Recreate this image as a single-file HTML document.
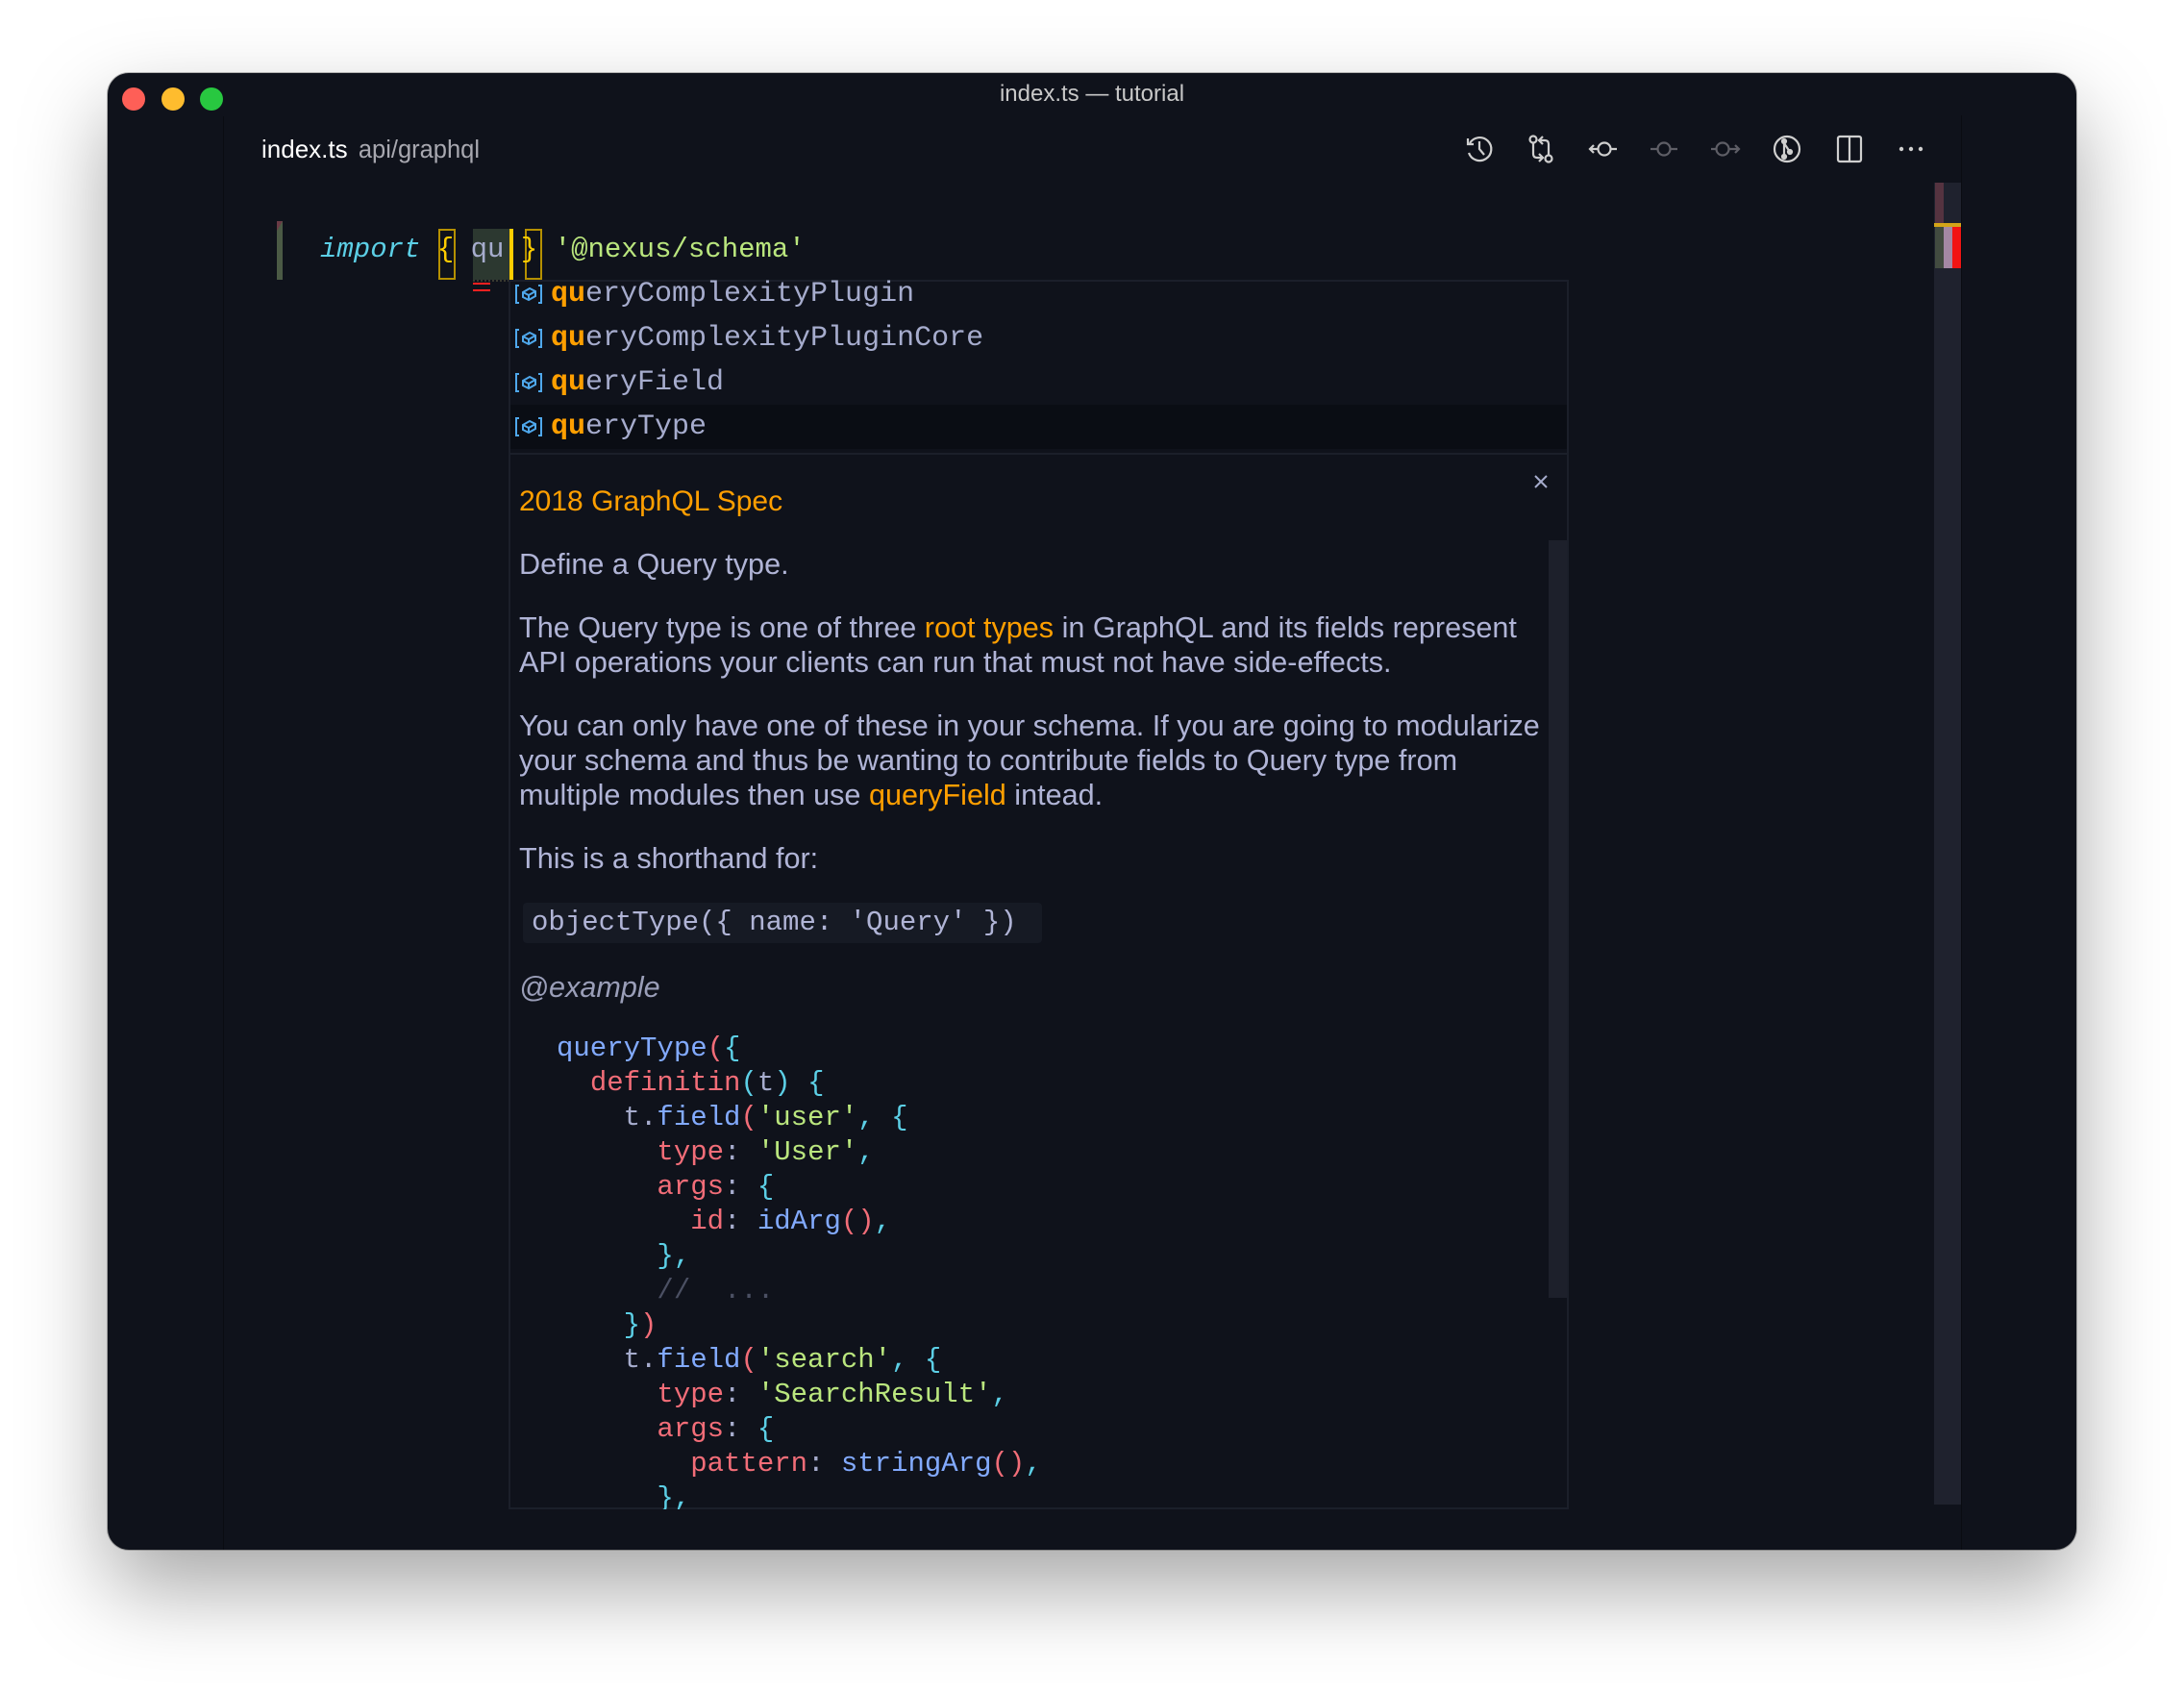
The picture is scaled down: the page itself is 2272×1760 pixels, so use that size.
<!DOCTYPE html>
<html><head><meta charset="utf-8"><style>
*{margin:0;padding:0;box-sizing:border-box}
html,body{width:2272px;height:1760px;background:#fff;overflow:hidden}
.win{position:absolute;left:112px;top:76px;width:2048px;height:1536px;background:#0f121b;border-radius:22px;box-shadow:0 40px 90px rgba(0,0,0,.35),0 0 0 1px rgba(0,0,0,.25);overflow:hidden}
.abs{position:absolute}
.mono{font-family:"Liberation Mono",monospace;font-size:29px;white-space:pre}
.sans{font-family:"Liberation Sans",sans-serif}
.tl{position:absolute;top:15px;width:24px;height:24px;border-radius:50%}
.ic{position:absolute;top:62px;width:34px;height:34px}
.sg{position:absolute;left:0;height:46px;width:100%;line-height:46px}
.sg b{color:#ff9f00}
.sg span.t{position:absolute;left:42px;color:#a6accd;font-family:"Liberation Mono",monospace;font-size:30px;white-space:pre}
.sg svg{position:absolute;left:4px;top:12px}
.p{position:absolute;left:9px;color:#b0b4d6;font-family:"Liberation Sans",sans-serif;font-size:30.6px;line-height:36px;white-space:nowrap}
.o{color:#ff9f00}
.cl{position:absolute;left:48px;font-family:"Liberation Mono",monospace;font-size:29px;white-space:pre;line-height:36px;color:#a6accd}
.k{color:#f26d78}.s{color:#bae67e}.f{color:#82aaff}.b{color:#5ccfe6}.c{color:#4b5063}
</style></head><body>
<div class="win">
  <div class="tl" style="left:15px;background:#fe5f57"></div>
  <div class="tl" style="left:56px;background:#febc2e"></div>
  <div class="tl" style="left:96px;background:#28c840"></div>
  <div class="abs sans" style="left:0;width:2048px;top:8px;text-align:center;color:#c8c8c8;font-size:24px">index.ts — tutorial</div>
  <div class="abs" style="left:120px;top:45px;width:1px;height:1491px;background:#0a0c12"></div>
  <div class="abs" style="left:1928px;top:44px;width:1px;height:1492px;background:#0a0c12"></div>
  <div class="abs sans" style="left:160px;top:64px;font-size:26px;color:#fff">index.ts <span style="color:#a8a8b0;font-size:25.5px;margin-left:4px">api/graphql</span></div>

  <svg class="ic" style="left:1410px" viewBox="0 0 34 34" fill="none" stroke="#cfcfcf" stroke-width="2.2"><path d="M7 11 A12 12 0 1 1 6 21"/><path d="M5 6 V12 H11"/><path d="M17 9 V17 L22 23"/></svg>
  <svg class="ic" style="left:1474px" viewBox="0 0 34 34" fill="none" stroke="#cfcfcf" stroke-width="2.2"><circle cx="9" cy="7" r="3.5"/><circle cx="25" cy="27" r="3.5"/><path d="M9 11 V22 Q9 26 13 26 H18"/><path d="M15 22 L19 26 L15 30"/><path d="M25 23 V12 Q25 8 21 8 H16"/><path d="M19 4 L15 8 L19 12"/></svg>
  <svg class="ic" style="left:1539px" viewBox="0 0 34 34" fill="none" stroke="#cfcfcf" stroke-width="2.2"><circle cx="18" cy="17" r="6.5"/><path d="M24.5 17 H31 M11.5 17 H3"/><path d="M7 13 L3 17 L7 21"/></svg>
  <svg class="ic" style="left:1602px" viewBox="0 0 34 34" fill="none" stroke="#5e5e66" stroke-width="2.2"><circle cx="17" cy="17" r="6.5"/><path d="M23.5 17 H31 M10.5 17 H3"/></svg>
  <svg class="ic" style="left:1666px" viewBox="0 0 34 34" fill="none" stroke="#5e5e66" stroke-width="2.2"><circle cx="14" cy="17" r="6.5"/><path d="M20.5 17 H31 M7.5 17 H2"/><path d="M27 13 L31 17 L27 21"/></svg>
  <svg class="ic" style="left:1730px" viewBox="0 0 34 34" fill="none" stroke="#cfcfcf" stroke-width="2.2"><circle cx="17" cy="17" r="13"/><path d="M14 9 V25 M14 11 L20 20"/><circle cx="14" cy="9" r="2" fill="#cfcfcf"/><circle cx="14" cy="25" r="2" fill="#cfcfcf"/><circle cx="20" cy="20" r="2" fill="#cfcfcf"/></svg>
  <svg class="ic" style="left:1795px" viewBox="0 0 34 34" fill="none" stroke="#cfcfcf" stroke-width="2.2"><rect x="5" y="4" width="24" height="26" rx="2"/><path d="M17 4 V30"/></svg>
  <svg class="ic" style="left:1859px" viewBox="0 0 34 34" fill="#cfcfcf"><circle cx="7" cy="17" r="2.2"/><circle cx="17" cy="17" r="2.2"/><circle cx="27" cy="17" r="2.2"/></svg>

  <div class="abs" style="left:1900px;top:114px;width:28px;height:1375px;background:#1f222e"></div>
  <div class="abs" style="left:1901px;top:114px;width:9px;height:42px;background:#553340"></div>
  <div class="abs" style="left:1900px;top:156px;width:28px;height:4px;background:#d4a418"></div>
  <div class="abs" style="left:1901px;top:160px;width:9px;height:43px;background:#424b40"></div>
  <div class="abs" style="left:1910px;top:160px;width:9px;height:43px;background:#a488a4"></div>
  <div class="abs" style="left:1919px;top:160px;width:9px;height:43px;background:#f21414"></div>

  <div class="abs" style="left:176px;top:154px;width:6px;height:61px;background:#4b5a45"></div>
  <div class="abs" style="left:176px;top:154px;width:0;height:0;border-left:6px solid #6a3a45;border-bottom:10px solid transparent"></div>
  <div class="abs" style="left:380px;top:215px;width:170px;height:2px;border-top:2px dotted #3a3a30"></div>
  <div class="abs" style="left:344px;top:162px;width:18px;height:53px;border:2px solid #b59000"></div>
  <div class="abs" style="left:380px;top:162px;width:38px;height:53px;background:#2c3830"></div>
  <div class="abs" style="left:418px;top:162px;width:4px;height:53px;background:#ffcc00"></div>
  <div class="abs" style="left:434px;top:162px;width:18px;height:53px;border:2px solid #b59000"></div>
  <div class="abs" style="left:380px;top:218px;width:18px;height:2px;background:#ff2020"></div>
  <div class="abs" style="left:380px;top:225px;width:18px;height:2px;background:#ff2020"></div>
  <div class="abs mono" style="left:221px;top:159px;line-height:50px"><span style="color:#5ccfe6;font-style:italic">import</span> <span style="color:#ffcc00">{</span> <span style="color:#a6accd">qu</span> <span style="color:#ffcc00">}</span> <span class="s">'@nexus/schema'</span></div>

  <div class="abs" style="left:417px;top:215px;width:1103px;height:1279px;border:2px solid #1b1f2a;background:#0f121b"></div>
  <div class="abs" style="left:419px;top:207px;width:1099px;height:186px">
    <div class="sg" style="top:0"><svg width="30" height="22" viewBox="0 0 30 22" fill="none" stroke="#4fa8ec" stroke-width="2"><path d="M5 2 H2 V20 H5 M25 2 H28 V20 H25"/><path d="M9 9 L16 5 L22 8 L22 13 L15 17 L9 14 Z M9 9 L15 12 L22 8 M15 12 V17"/></svg><span class="t"><b>qu</b>eryComplexityPlugin</span></div>
    <div class="sg" style="top:46px"><svg width="30" height="22" viewBox="0 0 30 22" fill="none" stroke="#4fa8ec" stroke-width="2"><path d="M5 2 H2 V20 H5 M25 2 H28 V20 H25"/><path d="M9 9 L16 5 L22 8 L22 13 L15 17 L9 14 Z M9 9 L15 12 L22 8 M15 12 V17"/></svg><span class="t"><b>qu</b>eryComplexityPluginCore</span></div>
    <div class="sg" style="top:92px"><svg width="30" height="22" viewBox="0 0 30 22" fill="none" stroke="#4fa8ec" stroke-width="2"><path d="M5 2 H2 V20 H5 M25 2 H28 V20 H25"/><path d="M9 9 L16 5 L22 8 L22 13 L15 17 L9 14 Z M9 9 L15 12 L22 8 M15 12 V17"/></svg><span class="t"><b>qu</b>eryField</span></div>
    <div class="sg" style="top:138px;background:#0a0d14"><svg width="30" height="22" viewBox="0 0 30 22" fill="none" stroke="#4fa8ec" stroke-width="2"><path d="M5 2 H2 V20 H5 M25 2 H28 V20 H25"/><path d="M9 9 L16 5 L22 8 L22 13 L15 17 L9 14 Z M9 9 L15 12 L22 8 M15 12 V17"/></svg><span class="t"><b>qu</b>eryType</span></div>
  </div>
  <div class="abs" style="left:419px;top:395px;width:1099px;height:2px;background:#1b1f2a"></div>

  <div class="abs" style="left:419px;top:397px;width:1099px;height:1097px;overflow:hidden">
    <div class="abs" style="left:1080px;top:89px;width:19px;height:788px;background:#1d202b"></div>
    <svg class="abs" style="left:1064px;top:20px" width="16" height="16" viewBox="0 0 16 16" stroke="#a6accd" stroke-width="2"><path d="M2 2 L14 14 M14 2 L2 14"/></svg>
    <div class="p o" style="top:31px;font-size:30px">2018 GraphQL Spec</div>
    <div class="p" style="top:96px">Define a Query type.</div>
    <div class="p" style="top:162px">The Query type is one of three <span class="o">root types</span> in GraphQL and its fields represent</div>
    <div class="p" style="top:198px">API operations your clients can run that must not have side-effects.</div>
    <div class="p" style="top:264px">You can only have one of these in your schema. If you are going to modularize</div>
    <div class="p" style="top:300px">your schema and thus be wanting to contribute fields to Query type from</div>
    <div class="p" style="top:336px">multiple modules then use <span class="o">queryField</span> intead.</div>
    <div class="p" style="top:402px">This is a shorthand for:</div>
    <div class="abs" style="left:13px;top:466px;width:540px;height:42px;background:#161a24;border-radius:4px"></div>
    <div class="cl" style="left:22px;top:469px;color:#b0b4d6">objectType({ name: 'Query' })</div>
    <div class="p" style="top:536px;font-style:italic;color:#9a9eb8">@example</div>
    <div class="cl" style="top:600px"><span class="f">queryType</span><span class="k">(</span><span class="b">{</span></div>
    <div class="cl" style="top:636px">  <span class="k">definitin</span><span class="b">(</span>t<span class="b">)</span> <span class="b">{</span></div>
    <div class="cl" style="top:672px">    t.<span class="f">field</span><span class="k">(</span><span class="s">'user'</span><span class="b">,</span> <span class="b">{</span></div>
    <div class="cl" style="top:708px">      <span class="k">type</span>: <span class="s">'User'</span><span class="b">,</span></div>
    <div class="cl" style="top:744px">      <span class="k">args</span>: <span class="b">{</span></div>
    <div class="cl" style="top:780px">        <span class="k">id</span>: <span class="f">idArg</span><span class="k">()</span><span class="b">,</span></div>
    <div class="cl" style="top:816px">      <span class="b">},</span></div>
    <div class="cl c" style="top:852px">      //  ...</div>
    <div class="cl" style="top:888px">    <span class="b">}</span><span class="k">)</span></div>
    <div class="cl" style="top:924px">    t.<span class="f">field</span><span class="k">(</span><span class="s">'search'</span><span class="b">,</span> <span class="b">{</span></div>
    <div class="cl" style="top:960px">      <span class="k">type</span>: <span class="s">'SearchResult'</span><span class="b">,</span></div>
    <div class="cl" style="top:996px">      <span class="k">args</span>: <span class="b">{</span></div>
    <div class="cl" style="top:1032px">        <span class="k">pattern</span>: <span class="f">stringArg</span><span class="k">()</span><span class="b">,</span></div>
    <div class="cl" style="top:1068px">      <span class="b">},</span></div>
  </div>
</div>
</body></html>
